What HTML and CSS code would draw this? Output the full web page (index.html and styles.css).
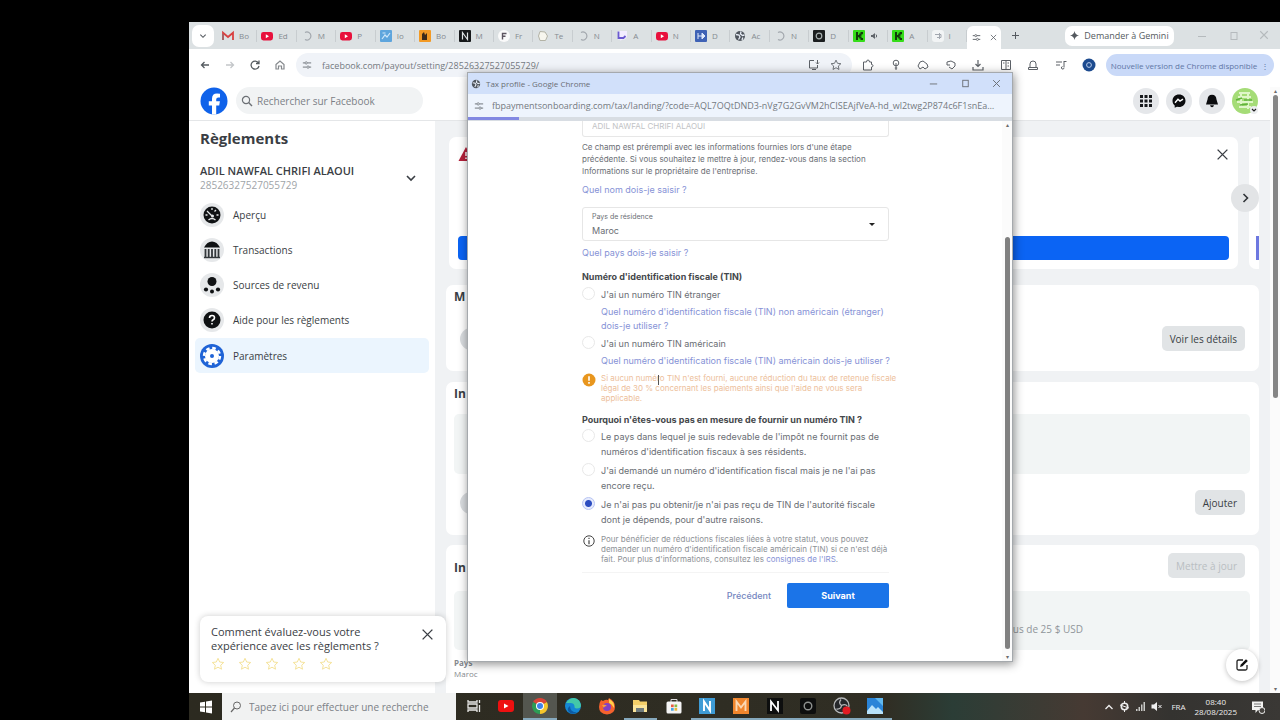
FILE: index.html
```html
<!DOCTYPE html>
<html lang="fr">
<head>
<meta charset="UTF-8" />
<meta name="viewport" content="width=device-width, initial-scale=1.0"/>
<title>Règlements</title>
<link rel="stylesheet" href="styles.css">
</head>
<body>

<!-- Icônes réutilisées -->
<svg class="sprite" width="0" height="0">
  <symbol id="i-close" viewBox="0 0 12 12"><path d="M1.5 1.5l9 9M10.5 1.5l-9 9" fill="none" stroke="currentColor" stroke-width="1.3"/></symbol>
  <symbol id="i-down" viewBox="0 0 12 12"><path d="M2 4l4 4 4-4" fill="none" stroke="currentColor" stroke-width="1.6"/></symbol>
  <symbol id="i-yt" viewBox="0 0 12 12"><rect x="0" y="2" width="12" height="8.5" rx="2.4" fill="#e8103c"/><path d="M4.8 4.2l3.2 2-3.2 2z" fill="#fff"/></symbol>
  <symbol id="i-spin" viewBox="0 0 12 12"><path d="M4 2.5a4 4 0 1 1 0 7" fill="none" stroke="#a3a8ae" stroke-width="1.2"/></symbol>
  <symbol id="i-kick" viewBox="0 0 12 12"><rect width="12" height="12" rx="1" fill="#35dc19"/><path d="M3 2h2v3h1.2V3.6h1.3V2H10v2.3H8.600v1.500H7.500v.8h1.100v1.500H10V10H7.500V8.400H6.200V7.200H5V10H3z" fill="#123b0c"/></symbol>
  <symbol id="i-min" viewBox="0 0 12 12"><path d="M2 6.500h8" stroke="currentColor"/></symbol>
  <symbol id="i-max" viewBox="0 0 12 12"><rect x="3" y="2.500" width="6" height="7" fill="none" stroke="currentColor"/></symbol>
  <symbol id="i-site" viewBox="0 0 12 12"><path d="M1 3.500h2.500M6.500 3.500H11M1 8.500h4.500M8.500 8.500H11" stroke="currentColor" stroke-width="1.2"/><circle cx="5" cy="3.500" r="1.400" fill="none" stroke="currentColor"/><circle cx="7.200" cy="8.500" r="1.400" fill="none" stroke="currentColor"/></symbol>
  <symbol id="i-search" viewBox="0 0 12 12"><circle cx="5" cy="5" r="3.600" fill="none" stroke="currentColor" stroke-width="1.200"/><path d="M7.600 7.600l3.400 3.400" stroke="currentColor" stroke-width="1.400"/></symbol>
  <symbol id="i-globe" viewBox="0 0 12 12"><circle cx="6" cy="6" r="5" fill="#50565e"/><path d="M2 4.500l3 .5 1 2-1.500 2.500M7 1.500l-.5 2.500 2 1.500 2-.5M8 10l.8-2.500" fill="none" stroke="#e9eff8" stroke-width="1.300"/></symbol>
  <symbol id="i-star" viewBox="0 0 14 14"><path d="M7 1.300l1.700 3.700 4 .5-3 2.700.8 4L7 10.200l-3.500 2 .8-4-3-2.700 4-.5z" fill="none" stroke="currentColor"/></symbol>
</svg>

<div class="screen">

  <!-- Onglets -->
  <div class="tabs">
    <button class="tab-menu" aria-label="Rechercher des onglets"><svg width="8" height="8"><use href="#i-down"/></svg></button>
    <div class="tab-list">
      <div class="tab"><svg width="12" height="12" viewBox="0 0 12 12"><path d="M1 10V2.800L6 7l5-4.200V10" fill="none" stroke="#d94141" stroke-width="1.800"/><path d="M1 4v6" stroke="#9a6a70" stroke-width="1.500"/></svg><span>Bo</span></div>
      <div class="tab"><svg width="12" height="12"><use href="#i-yt"/></svg><span>Ed</span></div>
      <div class="tab"><svg width="12" height="12"><use href="#i-spin"/></svg><span>M</span></div>
      <div class="tab"><svg width="12" height="12"><use href="#i-yt"/></svg><span>P</span></div>
      <div class="tab"><svg width="12" height="12" viewBox="0 0 12 12"><rect width="12" height="12" rx="1" fill="#5ea5dd"/><path d="M2 9l3-4 2 2 3-4M2.500 3h3" fill="none" stroke="#cfe7fa" stroke-width="1.200"/></svg><span>Io</span></div>
      <div class="tab"><svg width="12" height="12" viewBox="0 0 12 12"><rect width="12" height="12" rx="1" fill="#f39a25"/><path d="M3 10V4l2-2 1 3 2-2v7z" fill="#3d2b1b"/></svg><span>Bo</span></div>
      <div class="tab"><svg width="12" height="12" viewBox="0 0 12 12"><rect width="12" height="12" rx="1" fill="#16181a"/><path d="M3.500 9.500v-7l5 7v-7" fill="none" stroke="#dfe3e6" stroke-width="1.200"/></svg><span>M</span></div>
      <div class="tab"><svg width="12" height="12" viewBox="0 0 12 12"><circle cx="6" cy="6" r="6" fill="#fafafa"/><path d="M4.500 9.500v-6h4M4.500 6.300h3" fill="none" stroke="#5d5560" stroke-width="1.400"/></svg><span>Fr</span></div>
      <div class="tab"><svg width="12" height="12" viewBox="0 0 12 12"><path d="M3 1.500l5 .5 2.500 4-2 4.500H3L1.500 6z" fill="#f7f6ee" stroke="#b3b3a6"/></svg><span>Te</span></div>
      <div class="tab"><svg width="12" height="12"><use href="#i-spin"/></svg><span>N</span></div>
      <div class="tab"><svg width="12" height="12" viewBox="0 0 12 12"><path d="M2 1h9v6L8.500 9.500H6L4.500 11V9.500H2z" fill="#f2edff"/><path d="M2.500 1.500v6.500h5l2-2" fill="none" stroke="#6a5ad0" stroke-width="1.800"/></svg><span>A</span></div>
      <div class="tab"><svg width="12" height="12"><use href="#i-yt"/></svg><span>N</span></div>
      <div class="tab"><svg width="12" height="12" viewBox="0 0 12 12"><rect width="12" height="12" rx="1" fill="#3f62b5"/><path d="M3 3v6M3 6h4M7 3v6l3-3z" fill="#dfe8fb" stroke="#dfe8fb"/></svg><span>D</span></div>
      <div class="tab"><svg width="12" height="12"><use href="#i-globe"/></svg><span>Ac</span></div>
      <div class="tab"><svg width="12" height="12"><use href="#i-spin"/></svg><span>N</span></div>
      <div class="tab"><svg width="12" height="12" viewBox="0 0 12 12"><rect width="12" height="12" rx="1" fill="#1b1e1f"/><circle cx="6" cy="6" r="2.800" fill="none" stroke="#a7b0b0" stroke-width="1.200"/></svg><span>D</span></div>
      <div class="tab"><svg width="12" height="12"><use href="#i-kick"/></svg><svg width="8" height="8" viewBox="0 0 8 8"><path d="M1 3h1.500L5 1v6L2.500 5H1z" fill="#60656b"/><path d="M6 2.500q1.500 1.500 0 3" fill="none" stroke="#60656b"/></svg></div>
      <div class="tab"><svg width="12" height="12"><use href="#i-kick"/></svg><span>A</span></div>
      <div class="tab"><svg width="12" height="12" viewBox="0 0 12 12"><rect width="12" height="12" rx="3" fill="#f2f4f5"/><path d="M3 4.500h6v3H5M7.500 3v6" fill="none" stroke="#a3a8b0"/></svg><span>I</span></div>
    </div>
    <div class="tab-active"><svg width="9" height="9"><use href="#i-site"/></svg><button aria-label="Fermer l'onglet"><svg width="7" height="7"><use href="#i-close"/></svg></button></div>
    <button class="tab-new" aria-label="Nouvel onglet"><svg width="9" height="9" viewBox="0 0 9 9"><path d="M4.500 1v7M1 4.500h7" stroke="currentColor"/></svg></button>
    <button class="gemini"><svg width="9" height="9" viewBox="0 0 9 9"><path d="M4.500 0q.6 3.900 4.500 4.500-3.900.6-4.500 4.500Q3.900 5.100 0 4.500 3.900 3.900 4.500 0z" fill="currentColor"/></svg>Demander à Gemini</button>
    <div class="win-buttons">
      <svg width="12" height="12"><use href="#i-min"/></svg>
      <svg width="12" height="12"><use href="#i-max"/></svg>
      <svg width="10" height="10"><use href="#i-close"/></svg>
    </div>
  </div>

  <!-- Barre d'adresse -->
  <div class="toolbar">
    <div class="nav">
      <svg width="12" height="12" viewBox="0 0 12 12"><path d="M10 6H2.500M5.500 3l-3 3 3 3" fill="none" stroke="#555b60" stroke-width="1.300"/></svg>
      <svg width="12" height="12" viewBox="0 0 12 12"><path d="M2 6h7.500M6.500 3l3 3-3 3" fill="none" stroke="#c3c6c9" stroke-width="1.300"/></svg>
      <svg width="12" height="12" viewBox="0 0 12 12"><path d="M9.500 4A4 4 0 1 0 10 7M10 1.500v3H7" fill="none" stroke="#555b60" stroke-width="1.300"/></svg>
      <svg width="12" height="12" viewBox="0 0 12 12"><path d="M2 5.500L6 2l4 3.500V10H7.500V7h-3v3H2z" fill="none" stroke="#85898d" stroke-width="1.200"/></svg>
    </div>
    <div class="address">
      <svg width="10" height="10"><use href="#i-site"/></svg>
      <input type="text" aria-label="Adresse" value="facebook.com/payout/setting/28526327527055729/">
      <svg width="12" height="12" viewBox="0 0 12 12"><path d="M6 1.500H1.500v7.500h8V6M4 10.500h4M9.500 1v4M8 3.500L9.500 5 11 3.500" fill="none" stroke="#5c6167"/></svg>
      <svg width="12" height="12" class="grey"><use href="#i-star"/></svg>
    </div>
    <div class="extensions">
      <svg width="12" height="12" viewBox="0 0 12 12"><path d="M1.500 3h3q0-2 1.500-2t1.500 2h2v2.500q1.500 0 1.500 1.200T9.500 8v3h-8z" fill="none" stroke="#5c6167"/></svg>
      <svg width="12" height="12" viewBox="0 0 12 12"><circle cx="6" cy="4" r="2.800" fill="none" stroke="#5c6167"/><path d="M6 4v7M4.800 9h2.400" stroke="#5c6167"/></svg>
      <svg width="12" height="12" viewBox="0 0 12 12"><path d="M1 7l2-4 3-1 4 3 1 3-3 2-2-2-3 2z" fill="none" stroke="#5c6167"/></svg>
      <svg width="12" height="12" viewBox="0 0 12 12"><path d="M2 3l4-1 4 2v3L7 10 4 8M2 3v3h3" fill="none" stroke="#5c6167"/></svg>
      <svg width="12" height="12" viewBox="0 0 12 12"><path d="M6 1v6M3.500 5L6 7.500 8.500 5M1 8v3h10V8" fill="none" stroke="#5c6167" stroke-width="1.200"/></svg>
      <svg width="12" height="12" viewBox="0 0 12 12"><path d="M1.500 1.500h9v9h-9zM6 1.500v9M3 4h1.500M7.500 4H9M7.500 7H9" fill="none" stroke="#5c6167"/></svg>
      <svg width="12" height="12" viewBox="0 0 12 12"><path d="M3 8V5q0-3 3-3t3 3v3M1.500 8.500h9v2h-9z" fill="none" stroke="#5c6167"/></svg>
      <svg width="12" height="12" viewBox="0 0 12 12"><path d="M1 3h6M1 6h4M9 2v6M9 8.500a1.300 1.300 0 1 1-1.500-1M9 2.500h2.500" fill="none" stroke="#5c6167"/></svg>
      <svg width="14" height="14" viewBox="0 0 14 14"><circle cx="7" cy="7" r="6.500" fill="#1d4b8f"/><circle cx="7" cy="7" r="2.400" fill="none" stroke="#b9cdec"/></svg>
    </div>
    <button class="update">Nouvelle version de Chrome disponible <span>⋮</span></button>
  </div>

  <!-- Page -->
  <div class="page">
    <header class="fb-header">
      <svg width="28" height="28" viewBox="0 0 28 28"><circle cx="14" cy="14" r="13.500" fill="#0f62ea"/><path d="M12 27.500v-9H8.800v-4.200H12v-2.500q0-5.300 5-5.300 1.600 0 3 .3v3.600h-1.700q-2.100 0-2.100 2v1.900h3.700l-.7 4.200h-3v9z" fill="#fff"/></svg>
      <label class="fb-search"><svg width="12" height="12"><use href="#i-search"/></svg><input type="text" placeholder="Rechercher sur Facebook" aria-label="Rechercher sur Facebook"></label>
      <div class="fb-actions">
        <button aria-label="Menu"><svg width="14" height="14" viewBox="0 0 14 14"><path d="M1 1h3v3H1zM5.500 1h3v3h-3zM10 1h3v3h-3zM1 5.500h3v3H1zM5.500 5.500h3v3h-3zM10 5.500h3v3h-3zM1 10h3v3H1zM5.500 10h3v3h-3zM10 10h3v3h-3z" fill="#17191c"/></svg></button>
        <button aria-label="Messenger"><svg width="14" height="14" viewBox="0 0 14 14"><path d="M7 .5c3.800 0 6.500 2.700 6.500 6.200S10.800 13 7 13l-2-.3-2.300 1V11.500C1.300 10.300.5 8.700.5 6.700.5 3.200 3.200.5 7 .5z" fill="#0b0c0e"/><path d="M3 8.800L6 5.300l2 1.800 3-2" fill="none" stroke="#fff" stroke-width="1.400"/></svg></button>
        <button aria-label="Notifications"><svg width="14" height="14" viewBox="0 0 14 14"><path d="M7 .8q4.200 0 4.500 4.700L13 10.500H1L2.500 5.500Q2.800.8 7 .8zM5 11.200h4q-.5 2-2 2t-2-2z" fill="#0b0c0e"/></svg></button>
        <svg width="26" height="26" viewBox="0 0 26 26"><circle cx="13" cy="13" r="13" fill="#a5dc77"/><path d="M7 5h11M6 9h13M9 5v14M16 4v17M5 14h16M7 19h12" stroke="#dff6c8" stroke-width="2"/><path d="M4 12l6-2M12 12h8M8 17l8-1" stroke="#5fb23b" stroke-width="1.400"/><circle cx="22" cy="22" r="4" fill="#eceef0"/><path d="M20 21l2 2 2-2" fill="none" stroke="#222" stroke-width="1.200"/></svg>
      </div>
    </header>

    <div class="fb-body">
      <aside class="sidebar">
        <h1>Règlements</h1>
        <div class="account">
          <div>
            <div class="account-name">ADIL NAWFAL CHRIFI ALAOUI</div>
            <div class="account-id">28526327527055729</div>
          </div>
          <svg width="12" height="12"><use href="#i-down"/></svg>
        </div>
        <nav>
          <a href="#"><svg width="24" height="24" viewBox="0 0 24 24"><circle cx="12" cy="12" r="12" fill="#e6e8ea"/><circle cx="12" cy="12" r="8.500" fill="#101214"/><path d="M7 8l5 5M12 5v2M5.500 12h2M16.500 12h2M16 7l-1.500 1.500M8.500 17q3.500-3 7 0" stroke="#e6e8ea" stroke-width="1.300" fill="none"/><circle cx="12.500" cy="13" r="1.500" fill="#e6e8ea"/></svg>Aperçu</a>
          <a href="#"><svg width="24" height="24" viewBox="0 0 24 24"><circle cx="12" cy="12" r="12" fill="#e6e8ea"/><path d="M4 9.500q3-6 8-6t8 6z" fill="#101214"/><path d="M5.500 11v8M8.700 11v8M12 11v8M15.300 11v8M18.500 11v8" stroke="#33373b" stroke-width="1.800"/><path d="M4 19.500h16" stroke="#33373b" stroke-width="1.400"/></svg>Transactions</a>
          <a href="#"><svg width="24" height="24" viewBox="0 0 24 24"><circle cx="12" cy="12" r="12" fill="#e6e8ea"/><circle cx="12" cy="8.500" r="4.500" fill="#101214"/><circle cx="6" cy="16.500" r="2.100" fill="#101214"/><circle cx="12" cy="18.500" r="2" fill="#101214"/><circle cx="18" cy="16.500" r="2.100" fill="#101214"/></svg>Sources de revenu</a>
          <a href="#"><svg width="24" height="24" viewBox="0 0 24 24"><circle cx="12" cy="12" r="12" fill="#e6e8ea"/><circle cx="12" cy="12" r="8.500" fill="#101214"/><path d="M9.500 10q0-2.500 2.500-2.500t2.500 2.200q0 1.400-1.300 2-1.200.6-1.200 1.800M12 15v1.600" fill="none" stroke="#fff" stroke-width="1.600"/></svg>Aide pour les règlements</a>
          <a href="#" class="current"><svg width="24" height="24" viewBox="0 0 24 24"><circle cx="12" cy="12" r="12" fill="#1f63d6"/><circle cx="12" cy="12" r="7" fill="#fff"/><circle cx="12" cy="12" r="8" fill="none" stroke="#fff" stroke-width="2.400" stroke-dasharray="3.600 2.680"/><circle cx="12" cy="12" r="2" fill="#1f63d6"/></svg>Paramètres</a>
        </nav>
        <!-- Enquête -->
        <div class="survey">
          <div class="survey-top">
            <p>Comment évaluez-vous votre<br>expérience avec les règlements ?</p>
            <button aria-label="Fermer"><svg width="13" height="13"><use href="#i-close"/></svg></button>
          </div>
          <div class="stars">
            <button aria-label="1 étoile"><svg width="14" height="14"><use href="#i-star"/></svg></button>
            <button aria-label="2 étoiles"><svg width="14" height="14"><use href="#i-star"/></svg></button>
            <button aria-label="3 étoiles"><svg width="14" height="14"><use href="#i-star"/></svg></button>
            <button aria-label="4 étoiles"><svg width="14" height="14"><use href="#i-star"/></svg></button>
            <button aria-label="5 étoiles"><svg width="14" height="14"><use href="#i-star"/></svg></button>
          </div>
        </div>
      </aside>

      <main class="content">
        <div class="alerts">
          <section class="card alert">
            <div class="alert-top">
              <svg width="16" height="16" viewBox="0 0 16 16"><path d="M8 1l7.500 14H.5z" fill="#b3203a"/><path d="M8 6v4M8 11.500v1.500" stroke="#fff" stroke-width="1.500"/></svg>
              <button aria-label="Fermer"><svg width="13" height="13"><use href="#i-close"/></svg></button>
            </div>
            <button class="primary" aria-label="Continuer"></button>
          </section>
          <section class="card alert-next"><div></div></section>
          <button class="next" aria-label="Suivant"><svg width="12" height="12" viewBox="0 0 12 12"><path d="M4.500 2l4 4-4 4" fill="none" stroke="#303438" stroke-width="1.600"/></svg></button>
        </div>
        <section class="card payment">
          <h2>M</h2>
          <div class="row"><i class="dot"></i><button class="grey-btn">Voir les détails</button></div>
        </section>
        <section class="card infos">
          <h2>In</h2>
          <div class="well"></div>
          <div class="row"><i class="dot"></i><button class="grey-btn">Ajouter</button></div>
        </section>
        <section class="card minimum">
          <div class="row"><h2>In</h2><button class="grey-btn" disabled>Mettre à jour</button></div>
          <div class="well"><i class="dot"></i><span>plus de 25 $ USD</span></div>
          <p class="country"><b>Pays</b><br>Maroc</p>
        </section>
        <button class="compose" aria-label="Nouveau message"><svg width="14" height="14" viewBox="0 0 14 14"><path d="M8 2H3.500Q2 2 2 3.500v7Q2 12 3.500 12h7q1.500 0 1.500-1.500V7" fill="none" stroke="#222" stroke-width="1.300"/><path d="M5 9l.8-2.500L11 1.200 12.800 3 7.500 8.200z" fill="#111"/></svg></button>
      </main>
      <div class="scroll"><i>▴</i><span></span><i class="last">▾</i></div>
    </div>
  </div>

  <!-- Barre des tâches -->
  <footer class="taskbar">
    <button class="start" aria-label="Démarrer"><svg width="14" height="14" viewBox="0 0 14 14"><path d="M1 2.500l5-.8v4.800H1zM7 1.500l6-1v6H7zM1 7.500h5v4.800l-5-.8zM7 7.500h6v6l-6-1z" fill="#fff"/></svg></button>
    <label class="task-search"><svg width="12" height="12" viewBox="0 0 12 12"><circle cx="7" cy="4.500" r="3.500" fill="none" stroke="#666"/><path d="M4.500 7L1 11" stroke="#666" stroke-width="1.200"/></svg><input type="text" placeholder="Tapez ici pour effectuer une recherche" aria-label="Recherche"></label>
    <div class="apps">
      <div><svg width="18" height="18" viewBox="0 0 18 18"><path d="M4 3v2h9V3M4 15v-2h9v2M4 7h9v4H4zM15.500 3v3M15.500 8v7" fill="none" stroke="#e8e8e6" stroke-width="1.300"/></svg></div>
      <div><svg width="18" height="18" viewBox="0 0 18 18"><rect x="1" y="3" width="16" height="12" rx="3" fill="#ee1010"/><path d="M7 6.500l4.500 2.500L7 11.500z" fill="#fff"/></svg></div>
      <div class="open focus"><svg width="18" height="18" viewBox="0 0 18 18"><path d="M9 9L2.100 5A8 8 0 0 1 15.900 5z" fill="#dc4437"/><path d="M9 9L15.900 5A8 8 0 0 1 9 17z" fill="#f6c62b"/><path d="M9 9v8A8 8 0 0 1 2.100 5z" fill="#2d9c55"/><circle cx="9" cy="9" r="4" fill="#fff"/><circle cx="9" cy="9" r="3" fill="#3f83ea"/></svg></div>
      <div><svg width="18" height="18" viewBox="0 0 18 18"><circle cx="9" cy="9" r="8" fill="#1587d3"/><path d="M2 6Q5 1 10 1q6 1 7 7 0 3.500-4 3.500-3 0-2.500-2.500Q10 6 6.500 6 3.500 6 2 6z" fill="#43c8a8"/><path d="M6 9q0 6 7 6.500Q8 18 5 15T6 9z" fill="#0c5aa5"/></svg></div>
      <div><svg width="18" height="18" viewBox="0 0 18 18"><path d="M3 3l2 1q3-2 5-1l1-2q6 3 6 9 0 7-8 7.500Q1 17 1 10q0-4 2-7z" fill="#f4622e"/><path d="M11 2q6 3 5 9-2-4-5-5z" fill="#ffd24a"/><circle cx="9" cy="10" r="4" fill="#8340c5"/><path d="M4 8q3-1 5 1-3 0-3 2z" fill="#f9a03b"/></svg></div>
      <div class="open"><svg width="18" height="18" viewBox="0 0 18 18"><path d="M2 3h6l1 1.500h7V15H2z" fill="#f3cf6a"/><path d="M2 8h14v7H2z" fill="#fae59c"/><path d="M5 11h8v4H5z" fill="#6e7b7e"/></svg></div>
      <div><svg width="18" height="18" viewBox="0 0 18 18"><path d="M6 5V2.500h6V5" fill="none" stroke="#ddd"/><rect x="1.500" y="4.500" width="15" height="12" rx="1.500" fill="#f5f5f5"/><path d="M6 7.500h2.700v2.700H6z" fill="#e85a42"/><path d="M9.500 7.500h2.700v2.700H9.500z" fill="#86ba46"/><path d="M6 11h2.700v2.700H6z" fill="#44a4e4"/><path d="M9.500 11h2.700v2.700H9.500z" fill="#e9b739"/></svg></div>
      <div class="open"><svg width="18" height="18" viewBox="0 0 18 18"><rect x="1" y="1" width="16" height="16" fill="#3e9bd5"/><path d="M6 14V4.500l6 9V4" fill="none" stroke="#fff" stroke-width="1.900"/></svg></div>
      <div class="open"><svg width="18" height="18" viewBox="0 0 18 18"><rect x="1" y="1" width="16" height="16" fill="#f1862d"/><path d="M4.500 14V4.500l4.500 6 4.500-6V14" fill="none" stroke="#fbd8b4" stroke-width="1.900"/></svg></div>
      <div class="open"><svg width="18" height="18" viewBox="0 0 18 18"><rect x="1" y="1" width="16" height="16" fill="#0d0e0e"/><path d="M5 14V4.500l7 9V4" fill="none" stroke="#fff" stroke-width="1.800"/></svg></div>
      <div class="open"><svg width="18" height="18" viewBox="0 0 18 18"><rect x="1" y="1" width="16" height="16" rx="2" fill="#0d0e0e"/><circle cx="9" cy="9" r="3.800" fill="none" stroke="#8f9290" stroke-width="1.400"/></svg></div>
      <div class="open"><svg width="18" height="18" viewBox="0 0 18 18"><circle cx="8.500" cy="8.500" r="7.500" fill="#25272a" stroke="#b5b7b8" stroke-width="1.300"/><path d="M8.500 8.500Q5 6 8 2.500M8.500 8.500q4-2 6 1M8.500 8.500q-.5 4-5 3.500" fill="none" stroke="#b5b7b8" stroke-width="1.300"/><circle cx="13.500" cy="13.500" r="4" fill="#e21b22"/></svg></div>
      <div class="open"><svg width="18" height="18" viewBox="0 0 18 18"><rect x="1" y="1" width="16" height="16" fill="#2a84d8"/><path d="M1 14l5-6 4 4 2-2 5 5v2H1z" fill="#b9e2fa"/><path d="M9 1h8v8z" fill="#60b8f0"/></svg></div>
    </div>
    <div class="tray">
      <svg width="10" height="10" viewBox="0 0 10 10"><path d="M1.500 7L5 3.500 8.500 7" fill="none" stroke="#eee" stroke-width="1.300"/></svg>
      <svg width="11" height="11" viewBox="0 0 11 11"><circle cx="5.500" cy="5.500" r="3.200" fill="none" stroke="#eee" stroke-width="1.600"/><path d="M5.500 0v3M5.500 8v3M1 4l9 3" stroke="#eee"/></svg>
      <svg width="11" height="11" viewBox="0 0 11 11"><path d="M1 10V8h1.500v2zM3.500 10V6H5v4zM6 10V3.500h1.500V10zM8.500 10V1H10v9z" fill="#c9c9c6"/></svg>
      <svg width="11" height="11" viewBox="0 0 11 11"><path d="M.5 3.500H3L6 1v9L3 7.500H.5z" fill="#eee"/><path d="M7.500 4l3 3M10.500 4l-3 3" stroke="#eee"/></svg>
      <span class="lang">FRA</span>
      <time>08:40<br>28/08/2025</time>
      <svg width="14" height="14" viewBox="0 0 14 14"><path d="M1 1.500h11V10H7l-2.500 3V10H1z" fill="#f2f2f0"/><path d="M3 4h7M3 6.500h7" stroke="#777"/><circle cx="11" cy="10.500" r="3" fill="#45423e" stroke="#eee"/></svg>
    </div>
  </footer>

  <!-- Fenêtre du profil fiscal -->
  <div class="popup">
    <div class="popup-title">
      <svg width="10" height="10"><use href="#i-globe"/></svg>
      <span>Tax profile - Google Chrome</span>
      <div class="popup-buttons">
        <svg width="11" height="11"><use href="#i-min"/></svg>
        <svg width="11" height="11"><use href="#i-max"/></svg>
        <svg width="9" height="9"><use href="#i-close"/></svg>
      </div>
    </div>
    <div class="popup-url">
      <svg width="10" height="10"><use href="#i-site"/></svg>
      <span>fbpaymentsonboarding.com/tax/landing/?code=AQL7OQtDND3-nVg7G2GvVM2hCISEAjfVeA-hd_wl2twg2P874c6F1snEaPqR7d</span>
    </div>
    <div class="progress"><span></span></div>
    <form class="tax" onsubmit="return false">
      <input class="name-box" type="text" aria-label="Nom" value="ADIL NAWFAL CHRIFI ALAOUI" readonly>
      <p class="hint">Ce champ est prérempli avec les informations fournies lors d'une étape<br>précédente. Si vous souhaitez le mettre à jour, rendez-vous dans la section<br>Informations sur le propriétaire de l'entreprise.</p>
      <a href="#" class="help">Quel nom dois-je saisir ?</a>
      <div class="country-box">
        <label for="country">Pays de résidence</label>
        <select id="country"><option>Maroc</option></select>
        <svg width="6" height="3" viewBox="0 0 8 4"><path d="M0 0h8L4 4z" fill="#222"/></svg>
      </div>
      <a href="#" class="help">Quel pays dois-je saisir ?</a>

      <h3>Numéro d'identification fiscale (TIN)</h3>
      <label class="choice"><input type="radio" name="tin">J'ai un numéro TIN étranger</label>
      <a href="#" class="help sub">Quel numéro d'identification fiscale (TIN) non américain (étranger)<br>dois-je utiliser ?</a>
      <label class="choice"><input type="radio" name="tin">J'ai un numéro TIN américain</label>
      <a href="#" class="help sub">Quel numéro d'identification fiscale (TIN) américain dois-je utiliser ?</a>
      <div class="note warn">
        <svg width="14" height="14" viewBox="0 0 14 14"><circle cx="7" cy="7" r="6.500" fill="#e8961e"/><path d="M7 3.200v4.600M7 9v1.800" stroke="#fff" stroke-width="1.600"/></svg>
        <p>Si aucun numéro TIN n'est fourni, aucune réduction du taux de retenue fiscale<br>légal de 30 % concernant les paiements ainsi que l'aide ne vous sera<br>applicable.</p>
        <span class="caret"></span>
      </div>

      <h3>Pourquoi n'êtes-vous pas en mesure de fournir un numéro TIN ?</h3>
      <label class="choice long"><input type="radio" name="why"><span>Le pays dans lequel je suis redevable de l'impôt ne fournit pas de<br>numéros d'identification fiscaux à ses résidents.</span></label>
      <label class="choice long"><input type="radio" name="why"><span>J'ai demandé un numéro d'identification fiscal mais je ne l'ai pas<br>encore reçu.</span></label>
      <label class="choice long"><input type="radio" name="why" checked><span>Je n'ai pas pu obtenir/je n'ai pas reçu de TIN de l'autorité fiscale<br>dont je dépends, pour d'autre raisons.</span></label>
      <div class="note">
        <svg width="14" height="14" viewBox="0 0 14 14"><circle cx="7" cy="7" r="5.200" fill="none" stroke="#444"/><path d="M7 6.200v4M7 3.800v1.300" stroke="#444" stroke-width="1.200"/></svg>
        <p>Pour bénéficier de réductions fiscales liées à votre statut, vous pouvez<br>demander un numéro d'identification fiscale américain (TIN) si ce n'est déjà<br>fait. Pour plus d'informations, consultez les <a href="#">consignes de l'IRS</a>.</p>
      </div>
      <div class="form-actions">
        <button type="button" class="back">Précédent</button>
        <button type="submit" class="submit">Suivant</button>
      </div>
    </form>
    <div class="popup-scroll"><i>▴</i><span></span><i class="last">▾</i></div>
  </div>

</div>

</body>
</html>
```

FILE: styles.css
```css
/* Base */
* {
  box-sizing: border-box;
  margin: 0;
  padding: 0;
}

body {
  background: #000;
  font-family: "Open Sans", "Noto Sans", sans-serif;
  font-size: 10px;
  color: #3a3e44;
}

button, input, select {
  font: inherit;
  color: inherit;
  border: none;
  background: none;
  outline: none;
}

button {
  display: flex;
  align-items: center;
  justify-content: center;
}

a {
  color: inherit;
  text-decoration: none;
}

svg {
  display: block;
  flex: none;
}

.sprite {
  position: absolute;
}

.screen {
  position: relative;
  display: flex;
  flex-direction: column;
  height: 100vh;
  margin-left: 189px;
  padding-top: 22px;
  overflow: hidden;
}

/* Onglets */
.tabs {
  display: flex;
  align-items: center;
  height: 27px;
  flex: none;
  padding-left: 3px;
  background: #dce1e3;
  color: #555a60;
}

.tab-menu {
  width: 22px;
  height: 22px;
  border-radius: 7px;
  background: #fff;
}

.tab-list {
  display: flex;
  flex: 1;
  padding-left: 4px;
}

.tab {
  display: flex;
  flex: 1;
  align-items: center;
  gap: 5px;
  min-width: 0;
  padding-left: 4px;
  border-right: 1px solid #c8cdd0;
  font-size: 8px;
  line-height: 12px;
  color: #858b91;
}

.tab-active {
  display: flex;
  align-items: center;
  justify-content: space-around;
  align-self: flex-end;
  width: 34px;
  height: 23px;
  border-radius: 6px 6px 0 0;
  background: #fff;
}

.tab-new {
  width: 28px;
  height: 20px;
}

.gemini {
  gap: 5px;
  width: 109px;
  height: 20px;
  margin-left: 36px;
  border-radius: 7px;
  background: #fff;
  font-size: 9px;
  font-weight: 500;
}

.win-buttons {
  display: flex;
  justify-content: space-between;
  width: 106px;
  padding: 0 11px 0 22px;
  color: #b5babd;
}

/* Barre d'adresse */
.toolbar {
  display: flex;
  align-items: center;
  gap: 10px;
  flex: none;
  height: 32px;
  padding: 0 6px 0 10px;
  background: #fff;
}

.nav {
  display: flex;
  gap: 13px;
}

.address {
  display: flex;
  flex: 1;
  align-items: center;
  gap: 10px;
  height: 24px;
  padding: 0 10px 0 6px;
  border-radius: 12px;
  background: #f0f3f8;
  font-size: 9px;
  color: #74797f;
}

.address input {
  flex: 1;
  min-width: 0;
}

.grey {
  color: #5c6167;
}

.extensions {
  display: flex;
  justify-content: space-between;
  align-items: center;
  width: 234px;
}

.update {
  gap: 4px;
  width: 168px;
  height: 22px;
  border-radius: 11px;
  background: #c9d9f8;
  font-size: 8px;
  color: #6076a5;
  white-space: nowrap;
}

/* Page */
.page {
  display: flex;
  flex: 1;
  flex-direction: column;
  min-height: 0;
  background: #fff;
}

.fb-header {
  display: flex;
  align-items: center;
  gap: 8px;
  flex: none;
  height: 40px;
  padding: 0 22px 0 11px;
  border-bottom: 1px solid #e4e6e8;
}

.fb-search {
  display: flex;
  align-items: center;
  gap: 4px;
  width: 187px;
  height: 27px;
  padding: 0 5px;
  border-radius: 14px;
  background: #f1f3f4;
  color: #6c7075;
  font-size: 10px;
}

.fb-search input {
  flex: 1;
  min-width: 0;
}

::placeholder {
  color: #7b8086;
  opacity: 1;
}

.fb-actions {
  display: flex;
  align-items: center;
  gap: 7px;
  margin-left: auto;
}

.fb-actions button {
  width: 26px;
  height: 26px;
  border-radius: 50%;
  background: #e5e7ea;
}

.fb-body {
  display: flex;
  flex: 1;
  min-height: 0;
}

/* Menu de gauche */
.sidebar {
  position: relative;
  z-index: 1;
  display: flex;
  flex-direction: column;
  width: 246px;
  padding: 8px 6px 11px;
  flex: none;
}

.sidebar h1 {
  padding-left: 5px;
  font-size: 15px;
  line-height: 18px;
}

.account {
  display: flex;
  align-items: center;
  justify-content: space-between;
  padding: 16px 12px 5px 5px;
}

.account-name {
  font-size: 11px;
  line-height: 15px;
  font-weight: 600;
}

.account-id {
  line-height: 14px;
  color: #a0a4a8;
}

.sidebar nav {
  display: flex;
  flex-direction: column;
}

.sidebar nav a {
  display: flex;
  align-items: center;
  gap: 9px;
  height: 35px;
  padding-left: 5px;
  border-radius: 5px;
  font-weight: 500;
}

.sidebar nav .current {
  margin-top: 1px;
  background: #ebf5fe;
}

.survey {
  width: 246px;
  margin-top: auto;
  margin-left: 5px;
  padding: 9px 12px 11px 11px;
  border-radius: 8px;
  background: #fff;
  box-shadow: 0 0 6px rgba(0,0,0,0.2);
}

.survey-top {
  display: flex;
  align-items: flex-start;
  justify-content: space-between;
}

.survey p {
  font-size: 11px;
  line-height: 14px;
  font-weight: 500;
}

.survey-top button {
  padding-top: 3px;
}

.stars {
  display: flex;
  gap: 13px;
  padding-top: 4px;
  color: #f5e39b;
}

/* Contenu */
.content {
  position: relative;
  display: flex;
  flex: 1;
  flex-direction: column;
  min-width: 0;
  padding: 16px 11px 0 11px;
  background: #f0f2f4;
  overflow: hidden;
}

.card {
  flex: none;
  border-radius: 7px;
  background: #fff;
}

.alerts {
  position: relative;
  display: flex;
  gap: 11px;
  flex: none;
  height: 132px;
  margin-left: 3px;
}

.alert {
  display: flex;
  flex: 1;
  flex-direction: column;
  justify-content: space-between;
  padding: 9px;
}

.alert-top {
  display: flex;
  align-items: center;
  justify-content: space-between;
}

.primary {
  height: 24px;
  border-radius: 4px;
  background: #0b64f4;
}

.alert-next {
  display: flex;
  align-items: flex-end;
  justify-content: flex-end;
  width: 10px;
  padding-bottom: 9px;
  border-radius: 7px 0 0 7px;
}

.alert-next div {
  width: 3px;
  height: 24px;
  background: #6d78e0;
}

/* Flèche du carrousel par-dessus les cartes */
.next {
  position: absolute;
  top: 47px;
  right: 0;
  width: 28px;
  height: 28px;
  border-radius: 50%;
  background: #e2e4e6;
}

.payment {
  height: 86px;
  margin-top: 16px;
}

.infos {
  height: 153px;
  margin-top: 11px;
}

.minimum {
  height: 160px;
  margin-top: 10px;
}

.card h2 {
  padding: 4px 0 0 8px;
  font-size: 12px;
  line-height: 16px;
}

.card .row {
  display: flex;
  align-items: center;
  justify-content: space-between;
  padding-right: 14px;
}

.payment .row {
  padding-top: 21px;
}

.infos .well {
  height: 60px;
  margin-top: 12px;
}

.infos .row {
  padding-top: 16px;
}

.minimum .row {
  padding-top: 8px;
}

.dot {
  width: 22px;
  height: 22px;
  margin-left: 14px;
  border-radius: 50%;
  background: #d9dcdf;
}

.grey-btn {
  height: 25px;
  padding: 0 8px;
  border-radius: 5px;
  background: #e1e4e6;
  font-weight: 500;
}

.grey-btn:disabled {
  color: #b9bec2;
}

.well {
  display: flex;
  align-items: center;
  justify-content: space-between;
  margin: 0 9px 0 8px;
  border-radius: 5px;
  background: #f2f5f5;
  color: #90959a;
}

.minimum .well {
  height: 59px;
  margin-top: 13px;
  padding: 16px 167px 0 0;
}

.country {
  padding: 7px 8px;
  font-size: 8px;
  line-height: 11px;
  color: #85898e;
}

.compose {
  position: absolute;
  right: 12px;
  bottom: 12px;
  width: 32px;
  height: 32px;
  border-radius: 50%;
  background: #fff;
  box-shadow: 0 1px 5px rgba(0,0,0,0.25);
}

/* Barres de défilement */
.scroll, .popup-scroll {
  display: flex;
  flex-direction: column;
  align-items: center;
  width: 10px;
  flex: none;
  background: #fbfbfb;
}

.scroll i, .popup-scroll i {
  font-size: 6px;
  line-height: 8px;
  font-style: normal;
  color: #6b6b6b;
}

.scroll {
  margin-top: -34px;
}

.scroll span {
  width: 5px;
  height: 303px;
  border-radius: 3px;
  background: #858585;
}

.scroll .last, .popup-scroll .last {
  margin-top: auto;
}

/* Barre des tâches */
.taskbar {
  display: flex;
  flex: none;
  height: 27px;
  background: linear-gradient(to right, #2c2a20 0, #302e24 64%, #2b3d36 70%, #463a33 82%, #343330 90%, #3a3835 100%);
  color: #eee;
}

.start {
  width: 33px;
}

.task-search {
  display: flex;
  align-items: center;
  gap: 7px;
  width: 234px;
  padding-left: 8px;
  background: #f1f2f2;
  font-size: 10px;
}

.task-search input {
  flex: 1;
  min-width: 0;
}

.apps {
  display: flex;
  width: 436px;
}

.apps div {
  display: flex;
  flex: 1;
  align-items: center;
  justify-content: center;
  border-bottom: 2px solid transparent;
}

.apps .open {
  border-color: #86a9bd;
}

.apps .focus {
  background: #54564f;
}

.tray {
  display: flex;
  align-items: center;
  gap: 5px;
  margin-left: auto;
  padding-right: 15px;
}

.lang {
  padding: 0 4px;
  font-size: 8px;
}

.tray time {
  padding-right: 9px;
  font-size: 8px;
  line-height: 10px;
  text-align: center;
}

/* Fenêtre popup */
.popup {
  position: absolute;
  z-index: 2;
  top: 72px;
  left: 278px;
  display: grid;
  grid-template: 21px 23px 4px 1fr / 1fr 10px;
  width: 546px;
  height: 590px;
  border: 1px solid #a5a9ad;
  background: #fff;
  box-shadow: 1px 2px 9px rgba(0,0,0,0.45);
  font-family: Inter, Roboto, sans-serif;
  font-size: 9px;
  color: #6a6e74;
}

.popup-title, .popup-url, .progress {
  grid-column: 1 / 3;
}

.popup-title {
  display: flex;
  align-items: center;
  gap: 5px;
  padding: 0 11px 0 3px;
  background: #d1e0fa;
  font-family: "Open Sans", sans-serif;
  font-size: 8px;
}

.popup-buttons {
  display: flex;
  align-items: center;
  gap: 21px;
  margin-left: auto;
}

.popup-url {
  display: flex;
  align-items: center;
  gap: 8px;
  min-width: 0;
  padding: 0 13px 0 6px;
  background: #eef4fd;
  font-family: "Open Sans", sans-serif;
  font-size: 9px;
  color: #74797f;
}

.popup-url span {
  overflow: hidden;
  white-space: nowrap;
  text-overflow: ellipsis;
}

.progress {
  background: #d8dde3;
}

.progress span {
  display: block;
  width: 51px;
  height: 3px;
  background: #8288e2;
}

.tax {
  display: flex;
  flex-direction: column;
  align-items: flex-start;
  width: 307px;
  margin-left: 114px;
  white-space: nowrap;
}

.name-box {
  width: 100%;
  height: 16px;
  padding: 0 9px 6px;
  border: 1px solid #e7e7e7;
  border-top: none;
  border-radius: 0 0 3px 3px;
  font-size: 8px;
  color: #c1c3c5;
}

.hint {
  padding-top: 4px;
  font-size: 8px;
  line-height: 12px;
}

.help {
  line-height: 14px;
  color: #8692d6;
}

.hint + .help {
  margin-top: 6px;
}

.country-box {
  display: grid;
  grid-template-columns: 1fr 8px;
  align-items: center;
  width: 100%;
  height: 34px;
  margin: 10px 0 5px;
  padding: 3px 11px 3px 9px;
  border: 1px solid #e6e6e6;
  border-radius: 3px;
}

.country-box label {
  font-size: 7px;
  line-height: 12px;
  grid-column: 1;
}

.country-box select {
  grid-column: 1;
  appearance: none;
  line-height: 13px;
  font-size: 9px;
}

.country-box svg {
  grid-column: 2;
  grid-row: 1 / 3;
}

.tax h3 {
  padding-top: 10px;
  font-size: 9px;
  line-height: 14px;
  font-weight: 700;
  color: #44474b;
}

.choice {
  display: flex;
  align-items: flex-start;
  gap: 6px;
  padding-top: 3px;
  line-height: 15px;
}

.choice input {
  appearance: none;
  width: 13px;
  height: 13px;
  border: 1px solid #e8e8e8;
  border-radius: 50%;
}

.choice input:checked {
  border-color: #b7c4f3;
  background: radial-gradient(circle, #2c4dc0 0 3px, #e6ebfd 4px);
}

.choice.long {
  padding-top: 2px;
  padding-bottom: 2px;
}

.sub {
  margin-left: 19px;
  padding-top: 3px;
}

.note {
  position: relative;
  display: flex;
  gap: 5px;
  padding-top: 5px;
  font-size: 8px;
  line-height: 10px;
  color: #8d9196;
}

.note a {
  color: #8692d6;
}

.warn {
  color: #edc09b;
}

/* Pointeur de texte posé sur la note */
.caret {
  position: absolute;
  top: 7px;
  left: 76px;
  width: 1px;
  height: 10px;
  background: #555;
}

.form-actions {
  display: flex;
  justify-content: flex-end;
  align-self: stretch;
  gap: 16px;
  margin-top: 8px;
  padding-top: 10px;
  border-top: 1px solid #f4f4f4;
}

.back {
  font-size: 9px;
  font-weight: 500;
  color: #7486c0;
}

.submit {
  width: 102px;
  height: 25px;
  border-radius: 2px;
  background: #1b74e8;
  color: #fff;
  font-weight: 700;
}

.popup-scroll span {
  width: 5px;
  height: 412px;
  margin-top: 108px;
  border-radius: 3px;
  background: #808080;
}
```
